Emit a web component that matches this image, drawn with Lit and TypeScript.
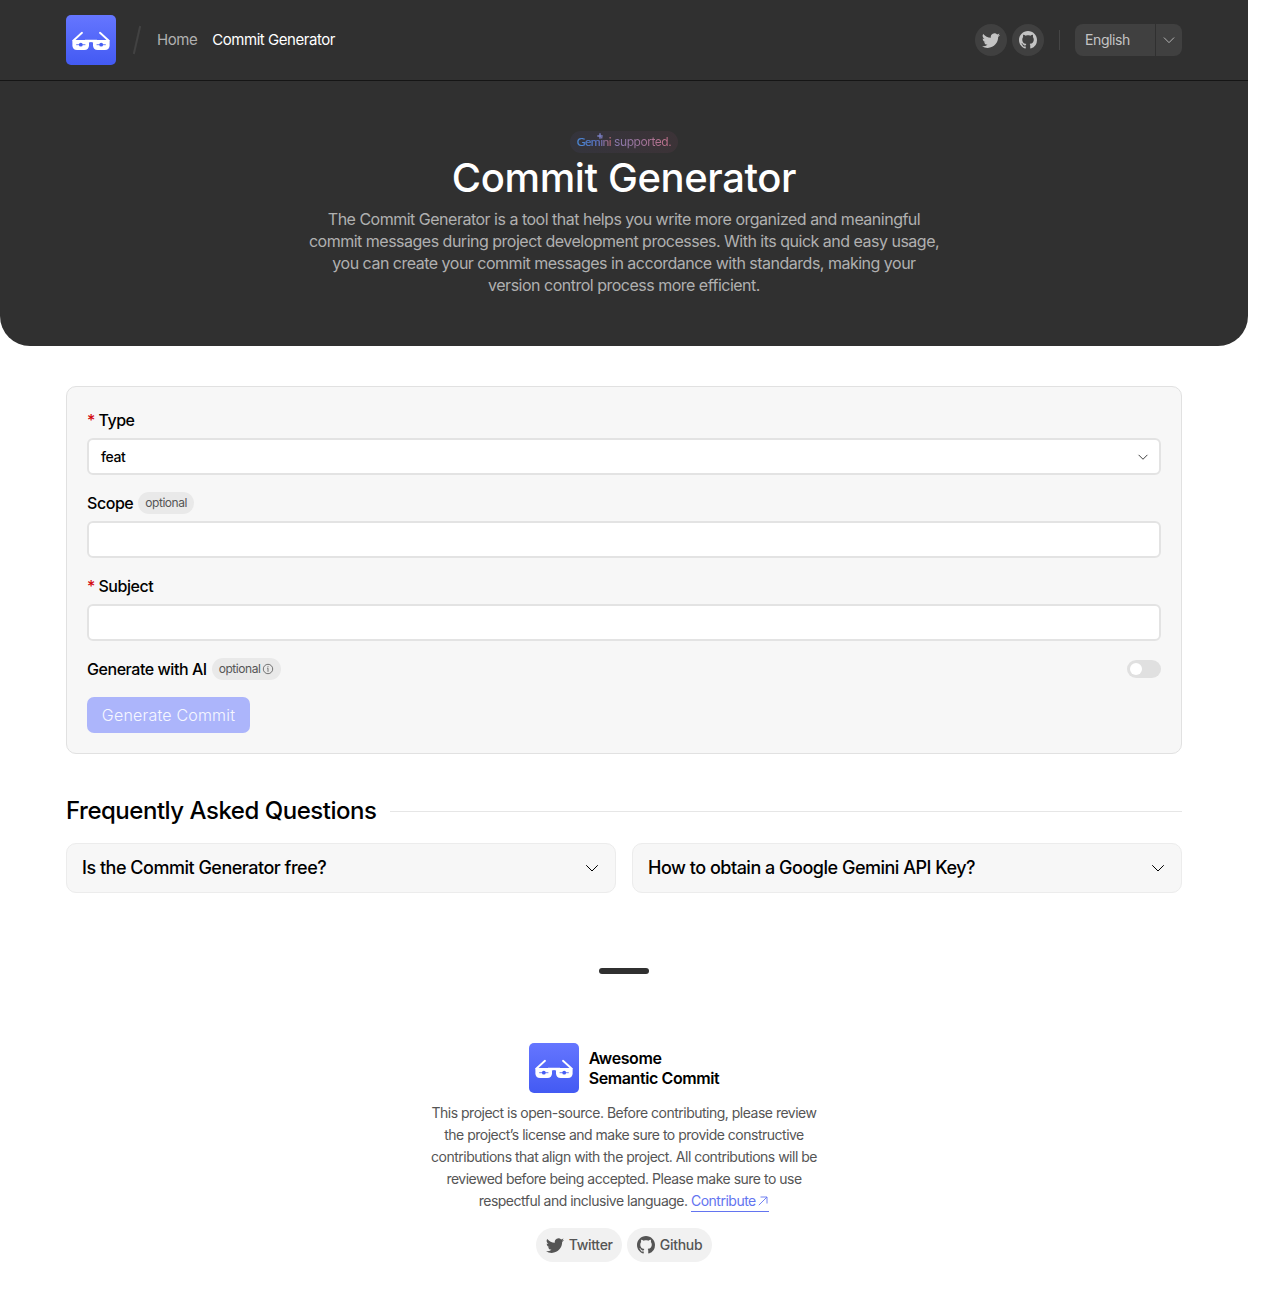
import { LitElement, html, css, svg } from "lit";
import { customElement } from "lit/decorators.js";

const twitter = html`<svg class="brand" viewBox="0 0 16 16" fill="currentColor"><path d="M5.026 15c6.038 0 9.341-5.003 9.341-9.334 0-.14 0-.282-.006-.422A6.685 6.685 0 0 0 16 3.542a6.658 6.658 0 0 1-1.889.518 3.301 3.301 0 0 0 1.447-1.817 6.533 6.533 0 0 1-2.087.793A3.286 3.286 0 0 0 7.875 6.03a9.325 9.325 0 0 1-6.767-3.429 3.289 3.289 0 0 0 1.018 4.382A3.323 3.323 0 0 1 .64 6.575v.045a3.288 3.288 0 0 0 2.632 3.218 3.203 3.203 0 0 1-.865.115 3.23 3.23 0 0 1-.614-.057 3.283 3.283 0 0 0 3.067 2.277A6.588 6.588 0 0 1 .78 13.58a6.32 6.32 0 0 1-.78-.045A9.344 9.344 0 0 0 5.026 15z"/></svg>`;
const github = html`<svg class="brand" viewBox="0 0 16 16" fill="currentColor"><path d="M8 0C3.58 0 0 3.58 0 8c0 3.54 2.29 6.53 5.47 7.59.4.07.55-.17.55-.38 0-.19-.01-.82-.01-1.49-2.01.37-2.53-.49-2.69-.94-.09-.23-.48-.94-.82-1.13-.28-.15-.68-.52-.01-.53.63-.01 1.08.58 1.23.82.72 1.21 1.87.87 2.33.66.07-.52.28-.87.51-1.07-1.78-.2-3.64-.89-3.64-3.95 0-.87.31-1.59.82-2.15-.08-.2-.36-1.02.08-2.12 0 0 .67-.21 2.2.82.64-.18 1.32-.27 2-.27.68 0 1.36.09 2 .27 1.53-1.04 2.2-.82 2.2-.82.44 1.1.16 1.92.08 2.12.51.56.82 1.27.82 2.15 0 3.07-1.87 3.75-3.65 3.95.29.25.54.73.54 1.48 0 1.07-.01 1.93-.01 2.2 0 .21.15.46.55.38A8.013 8.013 0 0 0 16 8c0-4.42-3.58-8-8-8z"/></svg>`;
const chevron = (size: number) => html`<svg width=${size} height=${size} viewBox="0 0 16 16" fill="none" stroke="currentColor" stroke-width="1" stroke-linecap="round" stroke-linejoin="round"><path d="M2.500 5.500 8 11l5.500-5.500"/></svg>`;

const lens = svg`<path d="M6.400 25h13.400q3.200 0 3.200 3v2.300q0 4.700-4.700 4.700h-7.200q-4.700 0-4.700-4.700z"/>`;

@customElement("brand-logo")
export class BrandLogo extends LitElement {
  static styles = css`
    :host { display: block; width: 50px; height: 50px; flex: none; }
    svg { display: block; }
  `;
  render() {
    return html`<svg width="50" height="50" viewBox="0 0 50 50">
      <defs><linearGradient id="g" x1="0" y1="0" x2="0" y2="1"><stop offset="0" stop-color="#6576ff"/><stop offset="1" stop-color="#435af3"/></linearGradient></defs>
      <rect width="50" height="50" rx="5" fill="url(#g)"/>
      <path d="M7.500 25.500 16 17.800M42.500 25.500 34 17.800" stroke="#fff" stroke-width="1.900" stroke-linecap="round" fill="none"/>
      <g fill="#fff">${lens}<g transform="translate(50 0) scale(-1 1)">${lens}</g>
      <path d="M19 24.800h12v2.600h-4q-2-1-4 0h-4z"/></g>
      <g fill="#465df4"><circle cx="14.800" cy="29.700" r="1.900"/><circle cx="35.200" cy="29.700" r="1.900"/></g>
      <path d="M10.200 29.700h9.200M30.600 29.700h9.200" stroke="#465df4" stroke-width=".8"/>
    </svg>`;
  }
}

@customElement("app-root")
export class AppRoot extends LitElement {
  static styles = css`
    :host { display: block; height: 1312px; background: #fff; color: #000; font-family: Inter, sans-serif; }
    * { box-sizing: border-box; }
    svg { display: block; flex: none; }
    .page { width: 1248px; }
    .dark { background: #303030; border-radius: 0 0 30px 30px; height: 346px; }
    .bar { height: 81px; border-bottom: 1px solid #151515; padding: 0 66px; display: flex; align-items: center; color: #bbb; }
    .slash { margin: 0 15px 0 16px; }
    .nav { display: flex; gap: 15px; font-size: 15px; line-height: 20px; letter-spacing: -0.450px; color: #b0b0b0; }
    .nav .on { color: #fff; }
    .tools { margin-left: auto; display: flex; align-items: center; }
    .round { width: 32px; height: 32px; border-radius: 50%; background: #404040; display: grid; place-items: center; margin-right: 5px; color: #c4c4c4; }
    .brand { width: 18px; height: 18px; }
    .sep { width: 1px; height: 20px; background: #454545; margin: 0 15px 0 10px; }
    .lang { display: flex; width: 107px; height: 32px; border-radius: 8px; overflow: hidden; background: #404040; font-size: 14px; line-height: 32px; letter-spacing: -.4px; color: #c4c4c4; }
    .lang .name { width: 81px; padding-left: 10px; border-right: 1px solid #303030; }
    .lang .drop { flex: 1; display: grid; place-items: center; }
    .hero { padding-top: 50px; display: flex; flex-direction: column; align-items: center; text-align: center; }
    .badge { display: flex; align-items: center; height: 22px; padding: 0 7px 1px; border-radius: 11px; font-size: 12px; letter-spacing: -.450px; background: linear-gradient(90deg, #34343c, #3c3337); gap: 3px; }
    .gem { position: relative; font-family: Lato, sans-serif; font-size: 12px; letter-spacing: -.5px; -webkit-text-stroke: .2px transparent; background: linear-gradient(90deg, #4a8ad8, #5a75c8 60%, #b0656f); -webkit-background-clip: text; background-clip: text; color: transparent; }
    .spark { position: absolute; left: 20.500px; top: -1px; }
    .sup { background: linear-gradient(90deg, #8579ae, #c07088); -webkit-background-clip: text; background-clip: text; color: transparent; }
    h1 { margin: 0 0 5px; height: 50px; line-height: 50px; font-size: 40px; font-weight: 500; letter-spacing: -.4px; color: #fff; }
    .lead { margin: 0; white-space: nowrap; font-size: 16px; line-height: 22px; letter-spacing: -.5px; color: #b0b0b0; }
    .body { padding: 40px 66px 0; }
    .form { height: 368px; border: 1px solid #e1e1e1; border-radius: 10px; background: #f7f7f7; padding: 20px; }
    .label { height: 27px; padding-bottom: 1px; display: flex; align-items: center; font-size: 16px; font-weight: 500; letter-spacing: -.450px; }
    .req { color: #d3080c; margin-right: 3.500px; }
    .field { height: 37px; margin: 4px 0 15px; border: 2px solid #e3e3e3; border-radius: 6px; background: #fff; padding: 0 10px 0 12px; display: flex; align-items: center; justify-content: space-between; font-size: 14px; font-weight: 500; letter-spacing: -.4px; }
    .tag { display: flex; align-items: center; gap: 2px; height: 22px; padding: 0 7px 1px; margin-left: 5px; border-radius: 11px; background: #e9e9e9; color: #555; font-size: 12px; line-height: 16px; font-weight: 400; letter-spacing: -.450px; }
    .toggle { margin-left: auto; width: 34px; height: 18px; border-radius: 9px; background: #e0e0e0; padding: 3px; }
    .knob { width: 12px; height: 12px; border-radius: 50%; background: #fff; }
    .submit { margin-top: 14px; width: 163px; height: 36px; border: 0; border-radius: 7px; background: #acb5fb; color: #f6f7ff; font: 300 16px Inter, sans-serif; letter-spacing: .2px; padding: 0; }
    .faqhead { display: flex; align-items: center; gap: 14px; margin-top: 42px; height: 30px; padding-bottom: 2px; font-size: 24px; font-weight: 500; letter-spacing: -.480px; }
    .rule { flex: 1; height: 1px; background: #e6e6e6; margin-top: 2px; }
    .faqs { display: grid; grid-template-columns: 1fr 1fr; gap: 16px; margin-top: 17px; }
    .faq { height: 50px; border: 1px solid #ececec; border-radius: 10px; background: #f7f7f7; padding: 0 15px; display: flex; align-items: center; justify-content: space-between; font-size: 18px; line-height: 24px; font-weight: 500; letter-spacing: -.490px; }
    .q { padding-bottom: 1px; }
    .foot { display: flex; flex-direction: column; align-items: center; padding-top: 75px; }
    .pill { width: 50px; height: 6px; border-radius: 3px; background: #303030; margin-bottom: 69px; }
    .id { display: flex; align-items: center; gap: 10px; font-size: 16px; line-height: 20px; font-weight: 600; letter-spacing: -.4px; }
    .note { margin: 9px 0 16px; white-space: nowrap; text-align: center; font-size: 14px; line-height: 22px; letter-spacing: -.5px; color: #555; }
    .link { display: inline-flex; align-items: center; gap: 1.500px; color: #6374f0; border-bottom: 1px solid #6374f0; height: 22px; vertical-align: top; }
    .socials { display: flex; gap: 5px; }
    .social { display: flex; align-items: center; gap: 5px; height: 34px; border-radius: 17px; background: #f1f1f1; padding: 0 9.500px; font-size: 14px; line-height: 18px; font-weight: 500; letter-spacing: -.280px; color: #555; }
  `;
  render() {
    return html`<div class="page">
      <div class="dark">
        <header class="bar">
          <brand-logo></brand-logo>
          <svg class="slash" width="10" height="32" viewBox="0 0 10 32"><path d="M1.800 30 8.200 2" stroke="#424242" stroke-width="2"/></svg>
          <nav class="nav"><span>Home</span><span class="on">Commit Generator</span></nav>
          <div class="tools">
            <span class="round">${twitter}</span><span class="round">${github}</span>
            <span class="sep"></span>
            <div class="lang"><span class="name">English</span><span class="drop">${chevron(14)}</span></div>
          </div>
        </header>
        <section class="hero">
          <div class="badge"><span class="gem">Gemini<svg class="spark" width="6" height="6" viewBox="0 0 6 6"><path d="M3 0Q3 3 6 3 3 3 3 6 3 3 0 3 3 3 3 0" fill="#7d83c9" stroke="#7d83c9" stroke-width=".5"/></svg></span><span class="sup">supported.</span></div>
          <h1>Commit Generator</h1>
          <p class="lead">The Commit Generator is a tool that helps you write more organized and meaningful<br>commit messages during project development processes. With its quick and easy usage,<br>you can create your commit messages in accordance with standards, making your<br>version control process more efficient.</p>
        </section>
      </div>
      <main class="body">
        <section class="form">
          <div class="label"><span class="req">*</span>Type</div>
          <div class="field">feat${chevron(12)}</div>
          <div class="label">Scope<span class="tag">optional</span></div>
          <div class="field"></div>
          <div class="label"><span class="req">*</span>Subject</div>
          <div class="field"></div>
          <div class="label">Generate with AI<span class="tag">optional<svg width="12" height="12" viewBox="0 0 12 12" fill="none" stroke="currentColor" stroke-width=".8"><circle cx="6" cy="6" r="4.700"/><path d="M5.200 5.200H6V8.800M6 3.200v1"/></svg></span>
            <span class="toggle"><div class="knob"></div></span></div>
          <button class="submit">Generate Commit</button>
        </section>
        <div class="faqhead">Frequently Asked Questions<span class="rule"></span></div>
        <section class="faqs">
          <div class="faq"><span class="q">Is the Commit Generator free?</span>${chevron(16)}</div>
          <div class="faq"><span class="q">How to obtain a Google Gemini API Key?</span>${chevron(16)}</div>
        </section>
      </main>
      <footer class="foot">
        <div class="pill"></div>
        <div class="id"><brand-logo></brand-logo><div>Awesome<br>Semantic Commit</div></div>
        <p class="note">This project is open-source. Before contributing, please review<br>the project’s license and make sure to provide constructive<br>contributions that align with the project. All contributions will be<br>reviewed before being accepted. Please make sure to use<br>respectful and inclusive language. <span class="link">Contribute<svg width="12" height="12" viewBox="0 0 12 12" fill="none" stroke="currentColor" stroke-width=".9"><path d="M1.800 10.200 10 2M3.500 2H10V8.500"/></svg></span></p>
        <div class="socials"><span class="social">${twitter}Twitter</span><span class="social">${github}Github</span></div>
      </footer>
    </div>`;
  }
}
